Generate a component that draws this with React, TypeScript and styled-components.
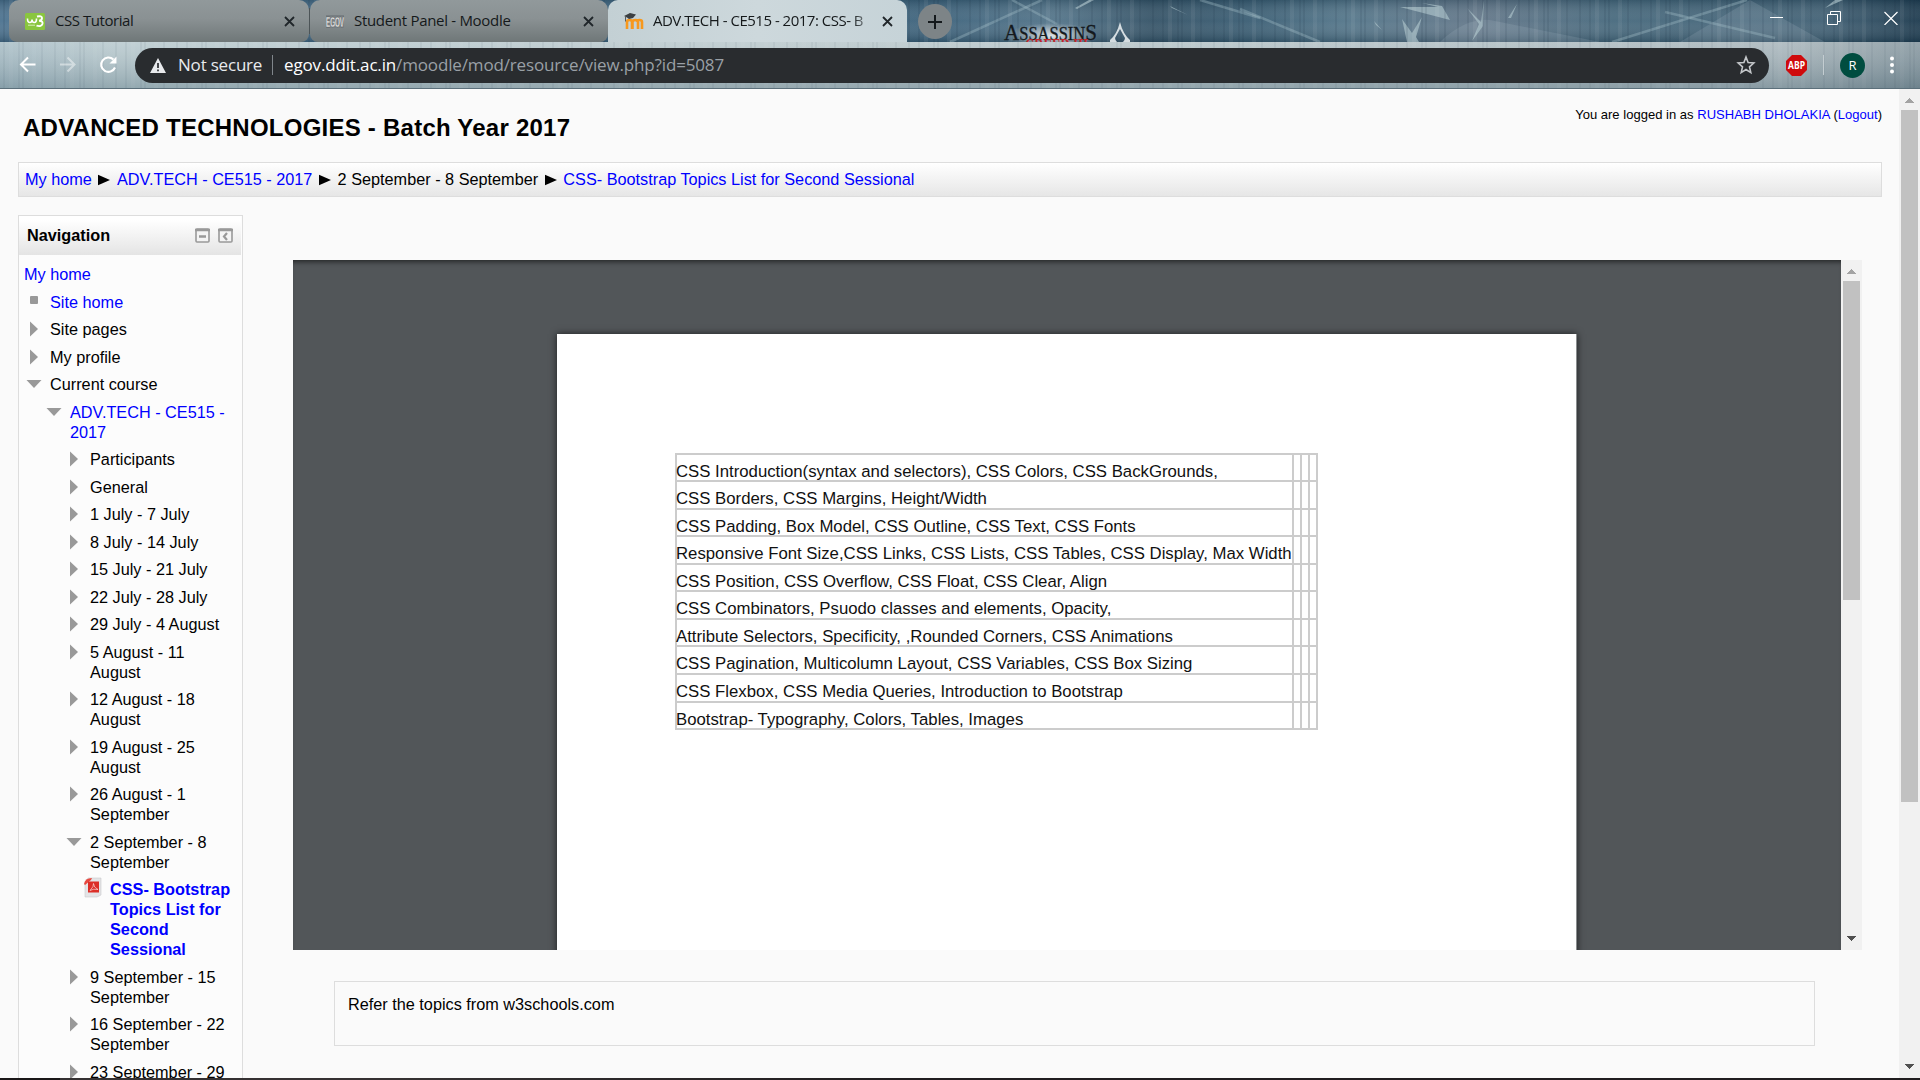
import React from "react";
import styled, { createGlobalStyle } from "styled-components";

const Global = createGlobalStyle`
  * { box-sizing: border-box; }
  html, body { margin: 0; padding: 0; overflow: hidden; }
  body { width: 1920px; height: 1080px; background: #fafafa; font-family: "Liberation Sans", Arial, sans-serif; color: #000; }
`;

const ui = `"Open Sans", "Noto Sans", sans-serif`;

const Screen = styled.div`
  width: 1920px;
  height: 1080px;
  display: flex;
  flex-direction: column;
  overflow: hidden;
`;

/* ---------- browser frame ---------- */
const Frame = styled.header`
  position: relative;
  height: 89px;
  flex: none;
  font-family: ${ui};
  border-bottom: 1px solid #5c707b;
`;
const Backdrop = styled.svg`
  position: absolute;
  inset: 0;
  z-index: 0;
`;
const TabStrip = styled.div`
  position: relative;
  height: 42px;
  padding-left: 9px;
  display: flex;
  align-items: stretch;
`;
const Tab = styled.div<{ $active?: boolean; $w?: number }>`
  width: ${(p) => p.$w ?? 300}px;
  display: flex;
  align-items: center;
  padding: 0 14px 0 16px;
  border-radius: ${(p) => (p.$active ? "10px 10px 0 0" : "10px 10px 8px 8px")};
  background: ${(p) =>
    p.$active
      ? "linear-gradient(90deg, #c3d0d4, #cdd8dc 50%, #c6d3d8)"
      : "linear-gradient(180deg, #91999b 0%, #8a9193 45%, #6f7778 100%)"};
`;
const Favicon = styled.svg`
  width: 20px;
  height: 17px;
  flex: none;
`;
const TabTitle = styled.span<{ $ls: number; $fade?: boolean; $ml?: number }>`
  flex: 1;
  margin: 0 12px 2px ${(p) => p.$ml ?? 10}px;
  font-size: 15px;
  line-height: 20px;
  letter-spacing: ${(p) => p.$ls}px;
  white-space: nowrap;
  overflow: hidden;
  color: #15191b;
  ${(p) => p.$fade && "mask-image: linear-gradient(90deg, #000 92%, transparent 102%);"}
`;
const Divider = styled.i<{ $h: number; $c: string }>`
  width: 1px;
  height: ${(p) => p.$h}px;
  background: ${(p) => p.$c};
  flex: none;
  align-self: center;
`;
const NewTab = styled.button`
  width: 34px;
  height: 35px;
  margin: 4px 0 0 11px;
  padding: 0;
  border: 0;
  border-radius: 50%;
  background: #7d8487;
  display: grid;
  place-items: center;
`;
const Controls = styled.div`
  margin-left: auto;
  display: flex;
  gap: 43px;
  padding: 11px 22px 0 0;
`;
const Toolbar = styled.div`
  position: relative;
  height: 46px;
  display: flex;
  align-items: center;
  padding: 0 19px 0 18px;
`;
const ToolIcons = styled.div`
  display: flex;
  gap: 20px;
  width: 117px;
`;
const Omnibox = styled.div`
  width: 1634px;
  height: 35px;
  border-radius: 18px;
  background: #292c2f;
  display: flex;
  align-items: center;
  padding: 0 13px 0 15px;
  color: #e8eaed;
  font-size: 17px;
  white-space: nowrap;
`;
const Secure = styled.span`
  margin: 0 11px 2px 12px;
  width: 83px;
  letter-spacing: -0.2px;
`;
const Url = styled.span`
  margin: 0 0 2px 11px;
  flex: 1;
  color: #9aa0a6;
  letter-spacing: -0.15px;
  b { font-weight: 400; color: #fff; }
`;
const Actions = styled.div`
  flex: 1;
  display: flex;
  align-items: center;
  justify-content: space-between;
  padding-left: 17px;
`;
const Avatar = styled.span`
  width: 25px;
  height: 25px;
  margin-right: 2px;
  border-radius: 50%;
  background: #004d40;
  color: #fff;
  font-size: 13px;
  display: grid;
  place-items: center;
`;

/* ---------- page ---------- */
const Viewport = styled.div`
  height: 989px;
  flex: none;
  display: flex;
  background: #fafafa;
`;
const Page = styled.main`
  width: 1899px;
  padding: 0 17px 0 18px;
  overflow: hidden;
`;
const Link = styled.a`
  color: #0000ff;
  text-decoration: none;
`;
const Masthead = styled.div`
  height: 73px;
  display: flex;
  justify-content: space-between;
`;
const Title = styled.h1`
  margin: 25px 0 0 5px;
  font-size: 24px;
  line-height: 28px;
  font-weight: 700;
  letter-spacing: 0.24px;
  white-space: nowrap;
`;
const Login = styled.div`
  margin-top: 17px;
  font-size: 13px;
  line-height: 17px;
  letter-spacing: 0.02px;
`;
const Crumbs = styled.nav`
  height: 35px;
  border: 1px solid #ddd;
  background: linear-gradient(#fff, #e6e6e6);
  display: flex;
  align-items: center;
  gap: 6.6px;
  padding: 0 6px;
  font-size: 16.25px;
  white-space: nowrap;
`;
const Columns = styled.div`
  display: flex;
  padding-top: 18px;
`;
const Block = styled.aside`
  width: 225px;
  height: 900px;
  border: 1px solid #ddd;
  background: #fcfcfc;
`;
const BlockHead = styled.div`
  height: 39px;
  margin: 0 1px 0 0;
  background: linear-gradient(#fff 10%, #e4e4e4);
  display: flex;
  align-items: center;
  gap: 8px;
  padding: 0 8px;
  h2 { margin: 0; flex: 1; font-size: 16.25px; }
`;
const Tree = styled.ul`
  list-style: none;
  margin: 0;
  padding: 9px 0 0 5px;
`;
const Node = styled.li<{ $depth: number; $bold?: boolean }>`
  display: flex;
  margin-bottom: 7.5px;
  padding-left: ${(p) => (p.$depth ? p.$depth * 20 - 20 : 0)}px;
  font-size: 16.25px;
  line-height: 20px;
  font-weight: ${(p) => (p.$bold ? 700 : 400)};
  white-space: pre;
`;
const Marker = styled.svg`
  width: 26px;
  height: 20px;
  flex: none;
`;
const Main = styled.section`
  padding: 45px 0 0 50px;
`;
const Viewer = styled.div`
  display: flex;
  width: 1569px;
  height: 690px;
`;
const Canvas = styled.div`
  width: 1548px;
  background: #525659;
  box-shadow: inset 0 5px 5px -3px rgba(0, 0, 0, 0.55);
  padding: 74px 0 0 264px;
  overflow: hidden;
`;
const Sheet = styled.div`
  width: 1020px;
  height: 640px;
  background: #fff;
  border-right: 1px solid #8a8d8f;
  box-shadow: 0 0 7px rgba(0, 0, 0, 0.65);
  padding: 119px 0 0 118px;
`;
const Table = styled.div`
  width: 643px;
  border-left: 2px solid #ccc;
  border-bottom: 2px solid #ccc;
`;
const Row = styled.div<{ $h: number }>`
  height: ${(p) => p.$h}px;
  display: grid;
  grid-template-columns: 617px 8px 8px 8px;
  border-top: 2px solid #ccc;
  font-size: 16.75px;
  line-height: 16px;
  white-space: nowrap;
  color: #111;
`;
const Cell = styled.div`
  border-right: 2px solid #ccc;
  padding-top: 9px;
  text-indent: -1px;
`;
const Note = styled.div`
  width: 1481px;
  height: 65px;
  margin: 31px 0 0 41px;
  border: 1px solid #ddd;
  padding: 12px 13px;
  font-size: 16.25px;
  line-height: 20px;
`;
const Track = styled.div`
  width: 21px;
  flex: none;
  background: #f1f1f1;
  display: flex;
  flex-direction: column;
  align-items: center;
`;
const Thumb = styled.div<{ $h: number }>`
  width: 17px;
  height: ${(p) => p.$h}px;
  background: #c1c1c1;
  margin-bottom: auto;
`;
const Taskbar = styled.div`
  height: 2px;
  background: linear-gradient(90deg, #1a1718 60px, #353132 60px 400px, #201d1f 900px);
`;

const ArrowBtn = ({ down }: { down?: boolean }) => (
  <svg width="21" height="21" shapeRendering="crispEdges">
    <path d={down ? "M6 7h9l-4.5 5z" : "M6 14h9l-4.5-5z"} fill={down ? "#505050" : "#a3a3a3"} />
  </svg>
);
const ScrollBar = ({ h }: { h: number }) => (
  <Track>
    <ArrowBtn />
    <Thumb $h={h} />
    <ArrowBtn down />
  </Track>
);
const Cross = () => (
  <svg width="11" height="11" viewBox="0 0 11 11">
    <path d="M1 1l9 9M10 1l-9 9" stroke="#20262a" strokeWidth="1.8" />
  </svg>
);
const CrumbArrow = () => (
  <svg width="12" height="12">
    <path d="M0 .8l12 5.2-12 5.2z" />
  </svg>
);

const shards = [
  "M1075 8l14-8h5l-17 9zM1170 6l18 9-16-7z",
  "M1400 7l38 0-16-4 20 3 8 14zM1374 21l8 9-6-5z",
  "M1402 19l10 14 10-16-6 20 3 5h-12z",
  "M1467 8l14 14 3-22 -1 26-11 15 7-17zM1508 18l9-14-6 14z",
  "M1825 8l18-8h-8z",
];
const beams = ["M1240 9l80 33", "M950 42l92-42", "M1200 0l60 18", "M1612 42l135-42", "M1665 12l110 26", "M1012 0l45 24"];

const BackdropArt = () => (
  <Backdrop width="1920" height="88" viewBox="0 0 1920 88">
    <defs>
      <linearGradient id="sky">
        <stop offset="0" stopColor="#4d7390" />
        <stop offset=".49" stopColor="#3f647d" />
        <stop offset=".55" stopColor="#54758a" />
        <stop offset=".6" stopColor="#365468" />
        <stop offset=".65" stopColor="#3b5e74" />
        <stop offset=".7" stopColor="#54768a" />
        <stop offset=".77" stopColor="#64788a" />
        <stop offset=".84" stopColor="#486a7e" />
        <stop offset=".95" stopColor="#436276" />
        <stop offset="1" stopColor="#1f3c50" />
      </linearGradient>
      <linearGradient id="shade" x2="0" y2="1">
        <stop offset="0" stopColor="#0c2636" stopOpacity=".25" />
        <stop offset=".5" stopColor="#fff" stopOpacity=".04" />
        <stop offset="1" stopColor="#0c2636" stopOpacity=".3" />
      </linearGradient>
      <linearGradient id="bar">
        <stop offset="0" stopColor="#a3b9c2" />
        <stop offset=".06" stopColor="#b4c6cb" />
        <stop offset=".4" stopColor="#b7c6ca" />
        <stop offset=".75" stopColor="#adbcc1" />
        <stop offset=".93" stopColor="#a3b1b7" />
        <stop offset="1" stopColor="#7e9099" />
      </linearGradient>
      <linearGradient id="barShade" x2="0" y2="1">
        <stop offset="0" stopColor="#fff" stopOpacity=".18" />
        <stop offset="1" stopColor="#486472" stopOpacity=".3" />
      </linearGradient>
      <radialGradient id="glow">
        <stop offset="0" stopColor="#fff" stopOpacity=".8" />
        <stop offset="1" stopColor="#fff" stopOpacity="0" />
      </radialGradient>
      <pattern id="streaks" width="61" height="88" patternUnits="userSpaceOnUse">
        <path d="M4 0v88M19 0v88M23 0v88M42 0v88M55 0v88" stroke="#102c3c" strokeOpacity=".1" strokeWidth="2" />
        <path d="M11 0v88M34 0v88" stroke="#fff" strokeOpacity=".06" strokeWidth="4" />
      </pattern>
    </defs>
    <rect width="1920" height="42" fill="url(#sky)" />
    <rect width="1920" height="42" fill="url(#shade)" />
    <path d="M1440 42q25-24 50-22l110 22zM1680 42l70-42 75 42z" fill="#9fb2bd" fillOpacity=".22" />
    {beams.map((d) => (
      <path key={d} d={d} fill="none" stroke="#9db9c2" strokeOpacity=".4" strokeWidth="2.5" />
    ))}
    {shards.map((d) => (
      <path key={d} d={d} fill="#a9c1c8" fillOpacity=".7" />
    ))}
    <rect width="1920" height="42" fill="url(#streaks)" />
    <rect y="42" width="1920" height="46" fill="url(#bar)" />
    <rect y="42" width="1920" height="46" fill="url(#barShade)" />
    <rect y="42" width="1920" height="46" fill="url(#streaks)" opacity=".5" />
    <svg x="1000" y="0" width="140" height="42">
      <ellipse cx="52" cy="36" rx="46" ry="13" fill="url(#glow)" />
      <g fontFamily="Liberation Serif, serif">
        <text x="4" y="40" fill="#14191d" stroke="#14191d" strokeWidth=".3" textLength="93" lengthAdjust="spacingAndGlyphs">
          <tspan fontSize="23">A</tspan>
          <tspan fontSize="18">SSASSIN</tspan>
          <tspan fontSize="23">S</tspan>
        </text>
        <text x="25" y="52" fontSize="19" fontWeight="700" fill="#c3262c" textLength="63" lengthAdjust="spacingAndGlyphs">CREED III</text>
      </g>
      <path d="M120 22q3 12 10 18v2h-7q2-2 2-4l-5-9-5 9q0 2 2 4h-7v-2q7-6 10-18z" fill="#d5dde1" />
    </svg>
  </Backdrop>
);

type Item = { t: string; d: number; k?: "open" | "leaf" | "pdf" | "none"; link?: boolean };
const items: Item[] = [
  { t: "My home", d: 0, k: "none", link: true },
  { t: "Site home", d: 1, k: "leaf", link: true },
  { t: "Site pages", d: 1 },
  { t: "My profile", d: 1 },
  { t: "Current course", d: 1, k: "open" },
  { t: "ADV.TECH - CE515 -\n2017", d: 2, k: "open", link: true },
  { t: "Participants", d: 3 },
  { t: "General", d: 3 },
  { t: "1 July - 7 July", d: 3 },
  { t: "8 July - 14 July", d: 3 },
  { t: "15 July - 21 July", d: 3 },
  { t: "22 July - 28 July", d: 3 },
  { t: "29 July - 4 August", d: 3 },
  { t: "5 August - 11\nAugust", d: 3 },
  { t: "12 August - 18\nAugust", d: 3 },
  { t: "19 August - 25\nAugust", d: 3 },
  { t: "26 August - 1\nSeptember", d: 3 },
  { t: "2 September - 8\nSeptember", d: 3, k: "open" },
  { t: "CSS- Bootstrap\nTopics List for\nSecond\nSessional", d: 4, k: "pdf", link: true },
  { t: "9 September - 15\nSeptember", d: 3 },
  { t: "16 September - 22\nSeptember", d: 3 },
  { t: "23 September - 29", d: 3 },
];

const rows: [string, number][] = [
  ["CSS Introduction(syntax and selectors), CSS Colors, CSS BackGrounds,", 27],
  ["CSS Borders, CSS Margins, Height/Width", 28],
  ["CSS Padding, Box Model, CSS Outline, CSS Text, CSS Fonts", 27],
  ["Responsive Font Size,CSS Links, CSS Lists, CSS Tables, CSS Display, Max Width", 28],
  ["CSS Position, CSS Overflow, CSS Float, CSS Clear, Align", 27],
  ["CSS Combinators, Psuodo classes and elements, Opacity,", 28],
  ["Attribute Selectors, Specificity, ,Rounded Corners, CSS Animations", 27],
  ["CSS Pagination, Multicolumn Layout, CSS Variables, CSS Box Sizing", 28],
  ["CSS Flexbox, CSS Media Queries, Introduction to Bootstrap", 28],
  ["Bootstrap- Typography, Colors, Tables, Images", 27],
];

const NodeMarker = ({ k }: { k?: Item["k"] }) => {
  if (k === "none") return null;
  if (k === "pdf")
    return (
      <Marker viewBox="0 0 26 20" overflow="visible">
        <path d="M4-1h13v17l-4 2H1V3z" fill="#e4e4e6" stroke="#c9c9cd" strokeWidth=".6" />
        <path d="M0 5q1-6 8-6L7 1 1 6z" fill="#e8483f" />
        <rect x="4" y="2.500" width="11" height="11" fill="#dc2f28" />
        <path d="M6 11.500q4-4 3.500-7 0 4 4.500 6-5-1-8 1" fill="none" stroke="#fff" strokeOpacity=".8" strokeWidth=".7" />
      </Marker>
    );
  return (
    <Marker viewBox="0 0 26 20">
      {k === "leaf" && <rect x="6" y="4" width="8" height="8" rx="1" fill="#999" />}
      {k === "open" && <path d="M2.500 6h15L10 14z" fill="#999" />}
      {!k && <path d="M6 2.500v15l8-7.500z" fill="#999" />}
    </Marker>
  );
};

export default function App() {
  return (
    <Screen>
      <Global />
      <Frame>
        <BackdropArt />
        <TabStrip>
          <Tab>
            <Favicon viewBox="0 0 20 17">
              <rect width="20" height="17" rx="1.500" fill="#8ac63f" />
              <path d="M2.500 5.500q0 4 2.300 4t2.200-3q0 3 2.300 3t2.200-4" fill="none" stroke="#fff" strokeWidth="1.600" />
              <path d="M12 3.500q5-1 5 1.500t-3 2.700q4 0 3.500 3-1 3.500-6 2" fill="none" stroke="#fff" strokeWidth="1.900" />
              <path d="M3 12.200h7" stroke="#d8efb8" strokeWidth="1" />
            </Favicon>
            <TabTitle $ls={-0.45}>CSS Tutorial</TabTitle>
            <Cross />
          </Tab>
          <Divider $h={26} $c="#4c5457" />
          <Tab $w={298}>
            <Favicon viewBox="0 0 20 17">
              <rect x="0" y="2" width="18" height="13" fill="#777e82" />
              <text x="0" y="13.500" fontSize="14" fontWeight="700" fill="#f4f4f4" stroke="#444" strokeWidth=".3" textLength="18" lengthAdjust="spacingAndGlyphs" fontFamily="Liberation Sans">EGOV</text>
            </Favicon>
            <TabTitle $ls={-0.3} $ml={8}>Student Panel - Moodle</TabTitle>
            <Cross />
          </Tab>
          <Tab $active $w={299}>
            <Favicon viewBox="0 0 20 17">
              <path d="M3 16V9q0-2 2.500-2T8 9v7M8.500 16V9q0-2 3-2t2.500 2v7M13 9q0-2 2.500-2T18 9v7" fill="none" stroke="#f7981d" strokeWidth="2.600" />
              <path d="M0 3l6-3 6 1.500L9 5 5 6 3 4.500z" fill="#3b3f42" />
              <path d="M1.500 3.500v5" stroke="#5a5a5a" strokeWidth="1" />
            </Favicon>
            <TabTitle $ls={-0.5} $fade $ml={9}>ADV.TECH - CE515 - 2017: CSS- B</TabTitle>
            <Cross />
          </Tab>
          <NewTab>
            <svg width="16" height="16"><path d="M8 1v14M1 8h14" stroke="#14191c" strokeWidth="2" /></svg>
          </NewTab>
          <Controls>
            <svg width="14" height="14"><path d="M0 6.500h13" stroke="#fff" /></svg>
            <svg width="14" height="14"><path d="M.5 3.500h10v10H.5zM3.500 3V.5h10v10H11" fill="none" stroke="#fff" /></svg>
            <svg width="14" height="14"><path d="M.5 1l13 13M13.500 1l-13 13" stroke="#fff" strokeWidth="1.200" /></svg>
          </Controls>
        </TabStrip>
        <Toolbar>
          <ToolIcons>
            <svg width="20" height="20" viewBox="0 0 20 20"><path d="M17.500 9.500H3M10 2.500L3 9.500l7 7" fill="none" stroke="#fff" strokeWidth="2" /></svg>
            <svg width="20" height="20" viewBox="0 0 20 20"><path d="M2 9.500h14.500M9.500 2.500l7 7-7 7" fill="none" stroke="#fff" strokeOpacity=".45" strokeWidth="2" /></svg>
            <svg width="20" height="20" viewBox="0 0 20 20"><path d="M17 12.500a7.200 7.200 0 1 1-1.600-8" fill="none" stroke="#fff" strokeWidth="2.100" /><path d="M18.500 1.500V8.500h-7z" fill="#fff" /></svg>
          </ToolIcons>
          <Omnibox>
            <svg width="16" height="15" viewBox="0 0 16 15"><path d="M8 0l8 15H0z" fill="#e8eaed" /><path d="M8 5v5M8 11.500v1.800" stroke="#292c2f" strokeWidth="1.700" /></svg>
            <Secure>Not secure</Secure>
            <Divider $h={20} $c="#80868b" />
            <Url><b>egov.ddit.ac.in</b>/moodle/mod/resource/view.php?id=5087</Url>
            <svg width="20" height="20" viewBox="0 0 20 20"><path d="M10 2l2.100 5.500 5.700.5-4.300 3.800 1.300 5.800L10 14.500l-4.800 3.100 1.300-5.800L2.200 8l5.700-.5z" fill="none" stroke="#c4c7ca" strokeWidth="1.600" /></svg>
          </Omnibox>
          <Actions>
            <svg width="21" height="21" viewBox="0 0 21 21">
              <path d="M6 0h9l6 6v9l-6 6H6l-6-6V6z" fill="#cf0a0c" />
              <text x="2" y="14.200" fontSize="10" fontWeight="700" fill="#fff" textLength="17" lengthAdjust="spacingAndGlyphs" fontFamily="Open Sans">ABP</text>
            </svg>
            <Divider $h={20} $c="#c3cdd1" />
            <Avatar>R</Avatar>
            <svg width="18" height="18"><circle cx="9" cy="2.500" r="2" fill="#fff" /><circle cx="9" cy="9" r="2" fill="#fff" /><circle cx="9" cy="15.500" r="2" fill="#fff" /></svg>
          </Actions>
        </Toolbar>
      </Frame>

      <Viewport>
        <Page>
          <Masthead>
            <Title>ADVANCED TECHNOLOGIES - Batch Year 2017</Title>
            <Login>
              You are logged in as <Link>RUSHABH DHOLAKIA</Link> (<Link>Logout</Link>)
            </Login>
          </Masthead>
          <Crumbs>
            <Link>My home</Link>
            <CrumbArrow />
            <Link>ADV.TECH - CE515 - 2017</Link>
            <CrumbArrow />
            <span>2 September - 8 September</span>
            <CrumbArrow />
            <Link>CSS- Bootstrap Topics List for Second Sessional</Link>
          </Crumbs>
          <Columns>
            <Block>
              <BlockHead>
                <h2>Navigation</h2>
                <svg width="15" height="15"><rect x="1" y="1" width="13" height="13" rx="1" fill="#f4f4f4" stroke="#999" strokeWidth="1.600" /><path d="M0 2h15" stroke="#999" strokeWidth="2.500" /><path d="M4 8.500h7" stroke="#999" strokeWidth="2.500" /></svg>
                <svg width="15" height="15"><rect x="1" y="1" width="13" height="13" rx="1" fill="#f4f4f4" stroke="#999" strokeWidth="1.600" /><path d="M0 2h15" stroke="#999" strokeWidth="2.500" /><path d="M9 5L6 8.500 9 12" fill="none" stroke="#999" strokeWidth="2.200" /></svg>
              </BlockHead>
              <Tree>
                {items.map((n) => (
                  <Node key={n.t} $depth={n.d} $bold={n.k === "pdf"}>
                    <NodeMarker k={n.k} />
                    {n.link ? <Link>{n.t}</Link> : <span>{n.t}</span>}
                  </Node>
                ))}
              </Tree>
            </Block>
            <Main>
              <Viewer>
                <Canvas>
                  <Sheet>
                    <Table>
                      {rows.map(([text, h]) => (
                        <Row key={text} $h={h}>
                          <Cell>{text}</Cell>
                          <Cell />
                          <Cell />
                          <Cell />
                        </Row>
                      ))}
                    </Table>
                  </Sheet>
                </Canvas>
                <ScrollBar h={319} />
              </Viewer>
              <Note>Refer the topics from w3schools.com</Note>
            </Main>
          </Columns>
        </Page>
        <ScrollBar h={692} />
      </Viewport>
      <Taskbar />
    </Screen>
  );
}
